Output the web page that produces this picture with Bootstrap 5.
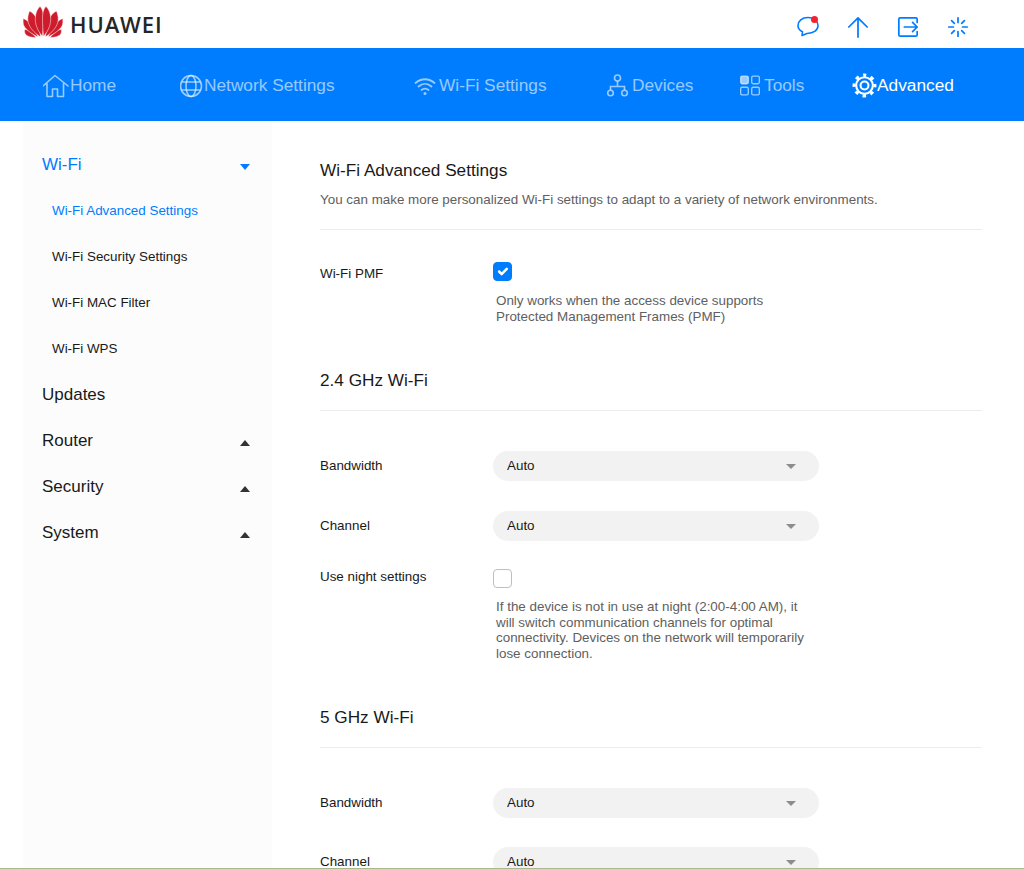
<!DOCTYPE html>
<html lang="en">
<head>
    <meta charset="UTF-8">
    <meta name="viewport" content="width=device-width, initial-scale=1.0">
    <title>Wi-Fi Advanced Settings</title>
    <link href="https://cdn.jsdelivr.net/npm/bootstrap@5.3.0/dist/css/bootstrap.min.css" rel="stylesheet">
    <style>
        html, body {
            height: 869px;
            overflow: hidden;
        }

        body {
            font-family: "Liberation Sans", Arial, sans-serif;
            color: #191919;
            background: #fff;
        }

        /* top strip */
        .top-strip {
            height: 48px;
            padding-left: 23px;
        }

        .hw-logo {
            margin-top: -5px;
        }

        .hw-logo path {
            stroke: #fff;
            stroke-width: .5px;
        }

        .brand-name {
            font-family: "Open Sans", sans-serif;
            font-weight: 600;
            font-size: 22px;
            letter-spacing: .9px;
            line-height: 1;
            color: #262626;
            margin-left: 7px;
        }

        .top-icons {
            margin-left: auto;
            width: 241px;
            padding-top: 6px;
            display: grid;
            grid-template-columns: 50px 50px 50px 50px;
        }

        .top-icons svg {
            display: block;
            margin: auto;
        }

        .dot-icon {
            position: relative;
        }

        .red-dot {
            position: absolute;
            width: 7px;
            height: 7px;
            border-radius: 50%;
            background: #f5222d;
            top: 0;
            left: 28px;
        }

        /* blue nav */
        .main-nav {
            height: 73px;
            background: #007dff;
            padding-left: 43px;
            padding-top: 2px;
            display: grid;
            grid-template-columns: 137px 234px 193px 133px 112px auto;
            align-items: center;
            font-size: 17.3px;
        }

        .main-nav a {
            display: flex;
            align-items: center;
            color: rgba(255, 255, 255, .6);
            text-decoration: none;
            padding: 0;
        }

        .main-nav a.active {
            color: #fff;
        }

        .main-nav svg {
            flex: none;
        }

        /* sidebar */
        .page-body {
            height: 748px;
        }

        .side-menu {
            width: 249px;
            margin-left: 23px;
            flex: none;
            background: #fcfcfc;
            padding-top: 21px;
        }

        .menu-head {
            height: 46px;
            padding: 0 22px 0 19px;
            font-size: 17px;
            color: #191919;
            text-decoration: none;
        }

        .menu-head.active {
            color: #007dff;
        }

        .menu-sub {
            height: 46px;
            padding-left: 29px;
            font-size: 13.4px;
            color: #191919;
            text-decoration: none;
        }

        .menu-sub.active {
            color: #007dff;
        }

        .tri-up, .tri-down {
            width: 0;
            height: 0;
            margin-top: 3px;
            border-left: 5.5px solid transparent;
            border-right: 5.5px solid transparent;
        }

        .tri-up {
            border-bottom: 6px solid #333;
        }

        .tri-down {
            border-top: 6px solid #007dff;
        }

        /* settings column */
        .settings-pane {
            width: 662px;
            margin-left: 48px;
            padding-top: 38px;
        }

        .sec-title {
            font-size: 17.2px;
            line-height: 22px;
            margin: 0;
            font-weight: 400;
        }

        .sec-note {
            font-size: 13.4px;
            line-height: 16px;
            color: #606060;
            margin: 11px 0 0;
        }

        .sec-rule {
            margin: 19px 0 0;
            border: 0;
            border-top: 1px solid #ededed;
            opacity: 1;
        }

        .first-rule {
            margin-top: 21px;
        }

        .set-row {
            display: grid;
            grid-template-columns: 173px 326px;
            font-size: 13.4px;
        }

        .set-label {
            line-height: 16px;
        }

        .hw-check.form-check-input {
            width: 19px;
            height: 19px;
            margin: 0;
            display: block;
            border-radius: 4px;
            border-color: #bfbfbf;
        }

        .hw-check.form-check-input:checked {
            background-color: #007dff;
            border-color: #007dff;
        }

        .set-help {
            font-size: 13.4px;
            line-height: 15.6px;
            color: #606060;
            margin: 11px 0 0 3px;
        }

        .set-help.pmf-help {
            margin-top: 12px;
        }

        .hw-select.form-select {
            height: 30px;
            border: 0;
            border-radius: 15px;
            background-color: #f2f2f2;
            background-image: none;
            font-size: 13.4px;
            padding: 0 14px;
            color: #191919;
        }

        .select-wrap {
            position: relative;
        }

        .select-wrap .tri-grey {
            position: absolute;
            right: 23px;
            top: 13px;
            width: 0;
            height: 0;
            border-left: 5px solid transparent;
            border-right: 5px solid transparent;
            border-top: 5px solid #8c8c8c;
        }

        .desk-edge {
            position: fixed;
            left: 0;
            right: 0;
            bottom: 0;
            height: 1px;
            background: #a9b98e;
        }
    </style>
</head>

<body>
    <!-- top strip -->
    <div class="top-strip d-flex align-items-center">
        <svg class="hw-logo" width="40" height="32" viewBox="0 0 40 32">
            <g fill="#cf1c2d">
                <path d="M13 31.500 C8.500 31.500 3.500 30.500 2 27.500 C1.500 26.500 1.500 25 1.500 23.500 C6 23.500 9.500 27.500 13 31.500Z"/>
                <path d="M15 31 C10 28.500 3.500 24.500 1 20 C0 18 0 15.500 .2 12.500 C6 14.500 11 21 15 31Z"/>
                <path d="M17.500 31 C11 26.500 5.500 21 4.800 14 C4.500 10.500 5.500 7.500 6.500 5 C11 7 14 12 15.500 18.500 C16.500 22.500 17 27 17.500 31Z"/>
                <path d="M19.500 30.500 C14 24 11.500 17 12.500 10 C13.200 5 15.500 1.500 17 .5 C19.500 2.500 20.500 7 20.500 12 C20.500 19 20 25 19.500 30.500Z"/>
                <path d="M27 31.500 C31.500 31.500 36.500 30.500 38 27.500 C38.500 26.500 38.500 25 38.500 23.500 C34 23.500 30.500 27.500 27 31.500Z"/>
                <path d="M25 31 C30 28.500 36.500 24.500 39 20 C40 18 40 15.500 39.800 12.500 C34 14.500 29 21 25 31Z"/>
                <path d="M22.500 31 C29 26.500 34.500 21 35.200 14 C35.500 10.500 34.500 7.500 33.500 5 C29 7 26 12 24.500 18.500 C23.500 22.500 23 27 22.500 31Z"/>
                <path d="M20.500 30.500 C26 24 28.500 17 27.500 10 C26.800 5 24.500 1.500 23 .5 C20.500 2.500 19.500 7 19.500 12 C19.500 19 20 25 20.500 30.500Z"/>
            </g>
        </svg>
        <span class="brand-name">HUAWEI</span>
        <div class="top-icons">
            <div class="dot-icon">
                <svg width="22" height="21" viewBox="0 0 22 21" fill="none" stroke="#007dff" stroke-width="1.6" stroke-linejoin="round">
                    <path d="M11 1.500 C5 1.500 1 5 1 9.500 C1 12.500 2.800 14.500 5.500 15.800 L5 19.500 L10 17.500 C17 17.500 21 14 21 9.500 C21 5 17 1.500 11 1.500Z"/>
                </svg>
                <span class="red-dot"></span>
            </div>
            <svg width="22" height="22" viewBox="0 0 24 24" fill="none" stroke="#007dff" stroke-width="1.9" stroke-linecap="round" stroke-linejoin="round">
                <path d="M12 23 V2 M2 12 L12 2 L22 12"/>
            </svg>
            <svg width="22" height="22" viewBox="0 0 24 24" fill="none" stroke="#007dff" stroke-width="1.9" stroke-linecap="round" stroke-linejoin="round">
                <path d="M22 7 V3.500 Q22 2 20.500 2 H3.500 Q2 2 2 3.500 V20.500 Q2 22 3.500 22 H20.500 Q22 22 22 20.500 V17 M8 12 H22 M17 7 L22 12 L17 17"/>
            </svg>
            <svg width="22" height="22" viewBox="0 0 24 24" fill="none" stroke="#007dff" stroke-width="1.9" stroke-linecap="round">
                <path d="M12 2 V7 M12 17 V22 M2 12 H7 M17 12 H22 M5 5 L8 8 M16 16 L19 19 M19 5 L16 8 M8 16 L5 19"/>
            </svg>
        </div>
    </div>

    <!-- main nav -->
    <nav class="main-nav">
        <a href="#">
            <svg width="27" height="24" viewBox="1 0 27 24" fill="none" stroke="currentColor" stroke-width="1.6" stroke-linecap="round" stroke-linejoin="round">
                <path d="M1 12 L13 1.500 L26 12 M5 9.500 V22.500 H10.500 V15 H15.500 V22.500 H21.500 V9.500"/>
            </svg>
            Home
        </a>
        <a href="#">
            <svg width="24" height="24" viewBox="1 0 24 24" fill="none" stroke="currentColor" stroke-width="1.6">
                <circle cx="12" cy="12" r="10.500"/>
                <ellipse cx="12" cy="12" rx="5" ry="10.500"/>
                <path d="M2.500 8 H21.500 M2.500 16 H21.500"/>
            </svg>
            Network Settings
        </a>
        <a href="#">
            <svg width="25" height="24" viewBox="0 0 22 24" preserveAspectRatio="xMinYMid" fill="none" stroke="currentColor" stroke-width="1.800" stroke-linecap="round">
                <path d="M1.500 9 C7 4 15 4 20.500 9 M4.500 12.500 C8.500 9 13.500 9 17.500 12.500 M7.500 16 C10 14 12 14 14.500 16"/>
                <circle cx="11" cy="19.500" r="1.500" fill="currentColor" stroke="none"/>
            </svg>
            Wi-Fi Settings
        </a>
        <a href="#">
            <svg width="21" height="23" viewBox="0 0 21 23" fill="none" stroke="currentColor" stroke-width="1.600" class="me-1">
                <circle cx="10.500" cy="4" r="3"/>
                <circle cx="3.500" cy="19" r="2.800"/>
                <circle cx="17.500" cy="19" r="2.800"/>
                <path d="M10.500 7 V12 M3.500 16 V12.500 H17.500 V16"/>
            </svg>
            Devices
        </a>
        <a href="#">
            <svg width="20" height="21" viewBox="0 0 21 21" fill="none" stroke="currentColor" stroke-width="1.400" class="me-1">
                <rect x=".700" y=".700" width="8" height="8" rx="1.500" fill="currentColor"/>
                <rect x="12.300" y=".700" width="8" height="8" rx="1.500"/>
                <rect x=".700" y="12.300" width="8" height="8" rx="1.500"/>
                <rect x="12.300" y="12.300" width="8" height="8" rx="1.500"/>
            </svg>
            Tools
        </a>
        <a href="#" class="active">
            <svg width="25" height="25" viewBox="0 0 24 24" fill="none" stroke="currentColor">
                <circle cx="12" cy="12" r="8" stroke-width="2"/>
                <circle cx="12" cy="12" r="10" stroke-width="3" stroke-dasharray="3.400 4.454" stroke-dashoffset="1.700" transform="rotate(-90 12 12)"/>
                <circle cx="12" cy="12" r="3.800" stroke-width="2"/>
            </svg>
            Advanced
        </a>
    </nav>

    <div class="page-body d-flex">
        <!-- side menu -->
        <aside class="side-menu">
            <a href="#" class="menu-head active d-flex align-items-center justify-content-between">Wi-Fi <span class="tri-down"></span></a>
            <a href="#" class="menu-sub active d-flex align-items-center">Wi-Fi Advanced Settings</a>
            <a href="#" class="menu-sub d-flex align-items-center">Wi-Fi Security Settings</a>
            <a href="#" class="menu-sub d-flex align-items-center">Wi-Fi MAC Filter</a>
            <a href="#" class="menu-sub d-flex align-items-center">Wi-Fi WPS</a>
            <a href="#" class="menu-head d-flex align-items-center">Updates</a>
            <a href="#" class="menu-head d-flex align-items-center justify-content-between">Router <span class="tri-up"></span></a>
            <a href="#" class="menu-head d-flex align-items-center justify-content-between">Security <span class="tri-up"></span></a>
            <a href="#" class="menu-head d-flex align-items-center justify-content-between">System <span class="tri-up"></span></a>
        </aside>

        <!-- settings -->
        <main class="settings-pane">
            <h5 class="sec-title">Wi-Fi Advanced Settings</h5>
            <p class="sec-note">You can make more personalized Wi-Fi settings to adapt to a variety of network environments.</p>
            <hr class="sec-rule first-rule">

            <div class="set-row" style="margin-top:32px">
                <label class="set-label pt-1">Wi-Fi PMF</label>
                <div>
                    <input class="form-check-input hw-check" type="checkbox" checked>
                    <p class="set-help pmf-help">Only works when the access device supports<br>Protected Management Frames (PMF)</p>
                </div>
            </div>

            <h5 class="sec-title" style="margin-top:45px">2.4 GHz Wi-Fi</h5>
            <hr class="sec-rule">

            <div class="set-row align-items-center" style="margin-top:40px">
                <label class="set-label">Bandwidth</label>
                <div class="select-wrap">
                    <select class="form-select hw-select"><option>Auto</option></select>
                    <span class="tri-grey"></span>
                </div>
            </div>
            <div class="set-row align-items-center" style="margin-top:30px">
                <label class="set-label">Channel</label>
                <div class="select-wrap">
                    <select class="form-select hw-select"><option>Auto</option></select>
                    <span class="tri-grey"></span>
                </div>
            </div>
            <div class="set-row" style="margin-top:28px">
                <label class="set-label">Use night settings</label>
                <div>
                    <input class="form-check-input hw-check" type="checkbox">
                    <p class="set-help">If the device is not in use at night (2:00-4:00 AM), it<br>will switch communication channels for optimal<br>connectivity. Devices on the network will temporarily<br>lose connection.</p>
                </div>
            </div>

            <h5 class="sec-title" style="margin-top:44px">5 GHz Wi-Fi</h5>
            <hr class="sec-rule">

            <div class="set-row align-items-center" style="margin-top:40px">
                <label class="set-label">Bandwidth</label>
                <div class="select-wrap">
                    <select class="form-select hw-select"><option>Auto</option></select>
                    <span class="tri-grey"></span>
                </div>
            </div>
            <div class="set-row align-items-center" style="margin-top:29px">
                <label class="set-label">Channel</label>
                <div class="select-wrap">
                    <select class="form-select hw-select"><option>Auto</option></select>
                    <span class="tri-grey"></span>
                </div>
            </div>
        </main>
    </div>
    <div class="desk-edge"></div>

    <script src="https://cdn.jsdelivr.net/npm/bootstrap@5.3.0/dist/js/bootstrap.bundle.min.js"></script>
</body>
</html>
